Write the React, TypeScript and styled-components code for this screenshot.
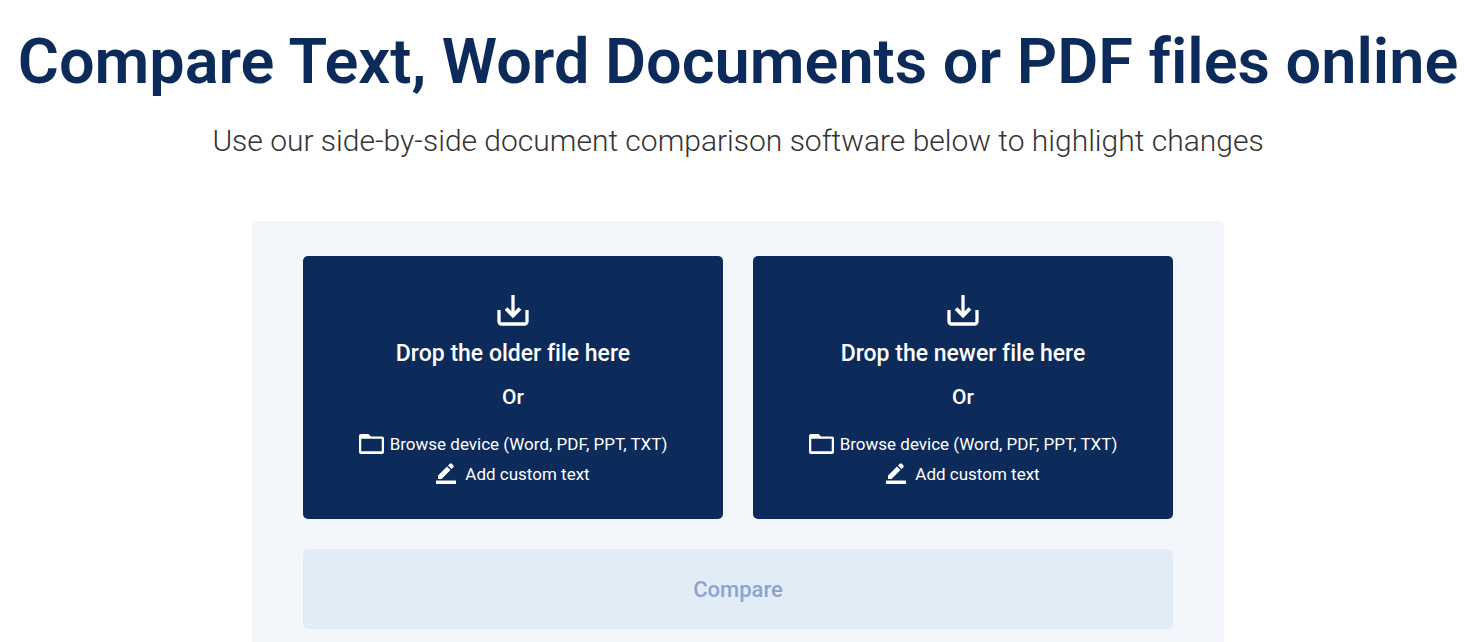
import React, { useId } from "react";
import styled, { createGlobalStyle } from "styled-components";

const GlobalStyle = createGlobalStyle`
  *, *::before, *::after { box-sizing: border-box; }
  body {
    margin: 0;
    background: #ffffff;
    color: #333333;
    font-family: Roboto, "Liberation Sans", Arial, sans-serif;
    font-variant-ligatures: none;
  }
`;

const Page = styled.main`
  display: flex;
  flex-direction: column;
  align-items: center;
  padding: 22px 16px 0 8px;
  text-align: center;
`;

const Title = styled.h1`
  margin: 0;
  color: #0c2b5b;
  font-size: 63px;
  font-weight: 600;
  line-height: 80px;
`;

const Subtitle = styled.p`
  margin: 18px 0 60px;
  font-size: 30px;
  font-weight: 300;
  line-height: 41px;
`;

const Panel = styled.form`
  width: 100%;
  max-width: 972px;
  padding: 35px 51px;
  border-radius: 5px;
  background: #f3f7fc;
`;

const DropZones = styled.div`
  display: grid;
  grid-template-columns: repeat(auto-fit, minmax(320px, 1fr));
  gap: 30px;
  margin-bottom: 30px;
`;

const DropZone = styled.section`
  display: flex;
  flex-direction: column;
  align-items: center;
  padding: 38px 20px 30px;
  border-radius: 5px;
  background: #0c2b5b;
  color: #ffffff;
`;

const DropTitle = styled.h2`
  margin: 12px 0 0;
  font-size: 23px;
  font-weight: 500;
  line-height: 30px;
`;

const Divider = styled.p`
  margin: 14px 0 18px;
  font-size: 21px;
  font-weight: 500;
  line-height: 28px;
`;

const BrowseLabel = styled.label`
  display: flex;
  align-items: center;
  gap: 6px;
  font-size: 17px;
  line-height: 30px;
  cursor: pointer;
`;

const TextButton = styled.button`
  display: flex;
  align-items: center;
  gap: 9px;
  padding: 0;
  border: 0;
  background: none;
  color: inherit;
  font: inherit;
  font-size: 17px;
  line-height: 30px;
  cursor: pointer;
`;

const CompareButton = styled.button`
  width: 100%;
  height: 80px;
  border: 0;
  border-radius: 5px;
  background: #e2ecf7;
  color: #8ba3cd;
  font: inherit;
  font-size: 22px;
  font-weight: 500;
`;

const DownloadIcon = () => (
  <svg width="34" height="33" viewBox="0 0 34 33" fill="none" stroke="#fff" strokeWidth="3.300" aria-hidden="true">
    <path d="M17 1v20" />
    <path d="M10 14.500l7 7 7-7" strokeWidth="3.800" />
    <path d="M3 16v11.500a2.500 2.500 0 0 0 2.500 2.500h23a2.500 2.500 0 0 0 2.500-2.500V16" />
  </svg>
);

const FolderIcon = () => (
  <svg width="25" height="20" viewBox="0 0 25 20" aria-hidden="true">
    <path
      fill="#fff"
      fillRule="evenodd"
      d="M2 0h7.500l2.500 2.500h11a2 2 0 0 1 2 2v13.500a2 2 0 0 1-2 2H2a2 2 0 0 1-2-2V2a2 2 0 0 1 2-2zM2.250 4.750v12.500h20.500v-12.500z"
    />
  </svg>
);

const PencilIcon = () => (
  <svg width="20" height="22" viewBox="0 0 20 22" fill="#fff" aria-hidden="true">
    <path d="M2 12.500L11 3.500l3.500 3.500-9 9H2zM12 2.500L13.800.700a1.500 1.500 0 0 1 2 0l1.500 1.500a1.500 1.500 0 0 1 0 2L15.500 6z" />
    <path d="M0 17.500h20v3.500H0z" />
  </svg>
);

const HiddenFile = styled.input`
  position: absolute;
  width: 1px;
  height: 1px;
  overflow: hidden;
  opacity: 0;
`;

function FileDrop({ age }: { age: "older" | "newer" }) {
  const id = useId();
  return (
    <DropZone>
      <DownloadIcon />
      <DropTitle>Drop the {age} file here</DropTitle>
      <Divider>Or</Divider>
      <HiddenFile id={id} type="file" accept=".doc,.docx,.pdf,.ppt,.pptx,.txt" />
      <BrowseLabel htmlFor={id}>
        <FolderIcon />
        Browse device (Word, PDF, PPT, TXT)
      </BrowseLabel>
      <TextButton type="button">
        <PencilIcon />
        Add custom text
      </TextButton>
    </DropZone>
  );
}

export default function App() {
  return (
    <>
      <GlobalStyle />
      <Page>
        <Title>Compare Text, Word Documents or PDF files online</Title>
        <Subtitle>Use our side-by-side document comparison software below to highlight changes</Subtitle>
        <Panel>
          <DropZones>
            <FileDrop age="older" />
            <FileDrop age="newer" />
          </DropZones>
          <CompareButton type="submit" disabled>
            Compare
          </CompareButton>
        </Panel>
      </Page>
    </>
  );
}
